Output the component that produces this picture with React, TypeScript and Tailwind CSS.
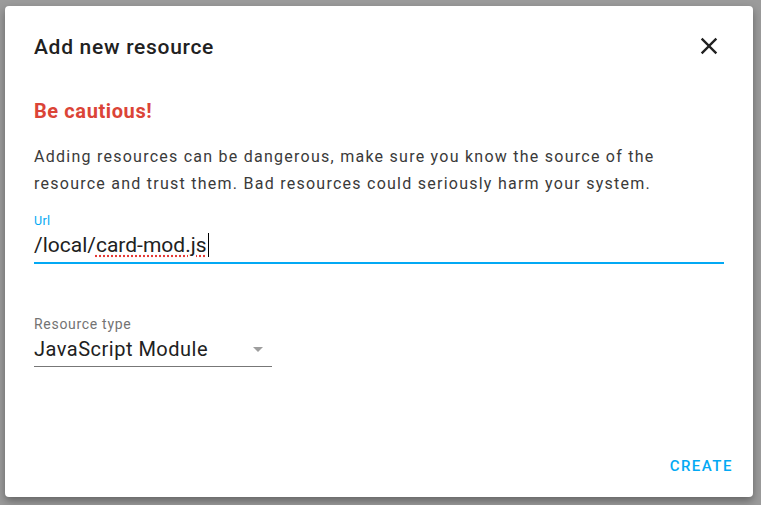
import React from "react";

export default function App() {
  return (
    <div className="w-[761px] h-[505px] bg-[#9b9b9b] pt-[6px] pl-[5px] overflow-hidden" style={{ fontFamily: "Roboto, 'Noto Sans', sans-serif" }}>
      <div className="w-[748px] h-[491px] bg-white rounded-[4px] shadow-[0_4px_8px_rgba(0,0,0,0.35)] flex flex-col pl-[29px] pr-[29px]">
        <div className="flex items-center justify-between h-[80px] pt-[3px]">
          <div className="text-[21px] font-medium text-[#212121] tracking-[0.7px]">Add new resource</div>
          <svg width="28" height="28" viewBox="0 0 24 24" className="mr-[1px] mt-[-3px]">
            <path d="M19,6.41L17.59,5L12,10.59L6.41,5L5,6.41L10.59,12L5,17.59L6.41,19L12,13.41L17.59,19L19,17.59L13.41,12L19,6.41Z" fill="#212121" />
          </svg>
        </div>
        <div className="text-[20px] font-bold text-[#db4437] mt-[13px] leading-[24px] tracking-[0.6px]">Be cautious!</div>
        <div className="text-[16px] text-[#3a3a3a] leading-[27px] mt-[20px] tracking-[1.25px] whitespace-nowrap">
          Adding resources can be dangerous, make sure you know the source of the
          <br />
          resource and trust them. Bad resources could seriously harm your system.
        </div>
        <div className="mt-[17px] text-[12.5px] text-[#03a9f4] leading-[14px] tracking-[0.3px]">Url</div>
        <div className="border-b-2 border-[#03a9f4] h-[36px] flex items-center">
          <span className="text-[21px] text-[#212121] leading-[24px]">
            /local/<span className="underline decoration-dotted decoration-[#e53935] underline-offset-[3px]">card-mod.js</span>
          </span>
          <span className="inline-block w-[1px] h-[24px] bg-black ml-[1px]" />
        </div>
        <div className="mt-[52px] text-[14px] text-[#737373] leading-[16px] tracking-[0.7px]">Resource type</div>
        <div className="w-[238px] h-[35px] border-b border-[#777] flex items-center justify-between">
          <span className="text-[20px] text-[#212121] leading-[22px] tracking-[0.5px]">JavaScript Module</span>
          <svg width="10" height="5" viewBox="0 0 10 5" className="mr-[9px]">
            <path d="M0 0 L10 0 L5 5 Z" fill="#9e9e9e" />
          </svg>
        </div>
        <div className="flex-1" />
        <div className="flex justify-end mb-[21px] mr-[-9px]">
          <span className="text-[15px] leading-[20px] font-medium text-[#03a9f4] tracking-[1.5px]">CREATE</span>
        </div>
      </div>
    </div>
  );
}
